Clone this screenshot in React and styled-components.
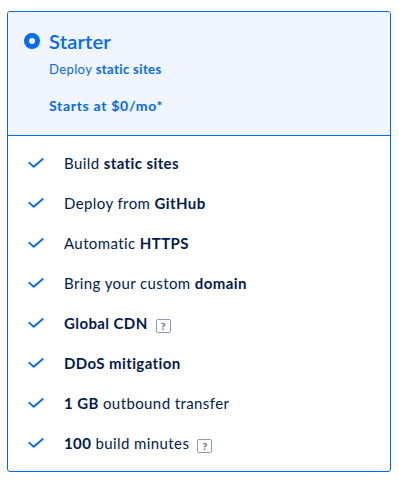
import React from "react";
import styled, { createGlobalStyle } from "styled-components";

const Global = createGlobalStyle`
  html, body { margin: 0; padding: 0; background: #fff; }
  body { font-family: Lato, "Open Sans", sans-serif; -webkit-font-smoothing: antialiased; }
`;

const Card = styled.div`
  margin: 11px 8px 0 7px;
  width: 384px;
  box-sizing: border-box;
  border: 1px solid #0069ff;
  border-radius: 3px;
  overflow: hidden;
`;

const Header = styled.div`
  background: #f1f6fe;
  border-bottom: 1px solid #0069ff;
  height: 124px;
  box-sizing: border-box;
  padding: 17px 16px 0 16px;
`;

const TitleRow = styled.div`
  display: flex;
  align-items: center;
  gap: 9px;
  height: 24px;
`;

const Radio = styled.span`
  width: 16px;
  height: 16px;
  box-sizing: border-box;
  border: 5px solid #0069ff;
  border-radius: 50%;
  background: #fff;
  flex: none;
`;

const Title = styled.h2`
  margin: 0;
  font-size: 20px;
  font-weight: 600;
  color: #0069ff;
  letter-spacing: 0.2px;
`;

const Sub = styled.p`
  margin: 7px 0 0 25px;
  font-size: 13px;
  color: #0069ff;
  line-height: 18px;
  letter-spacing: 0.4px;
  b { font-weight: 700; }
`;

const Price = styled.p`
  margin: 19px 0 0 25px;
  font-size: 14px;
  font-weight: 700;
  color: #0069ff;
  line-height: 18px;
  letter-spacing: 0.7px;
`;

const List = styled.ul`
  list-style: none;
  margin: 0;
  padding: 7px 0 8px;
`;

const Item = styled.li`
  display: flex;
  align-items: center;
  height: 40px;
  padding-left: 20px;
  font-size: 15px;
  color: #031b4e;
  letter-spacing: 0.4px;
  b { font-weight: 700; }
`;

const Check = styled.svg`
  width: 16px;
  height: 10px;
  margin-right: 20px;
  flex: none;
`;

const Help = styled.span`
  display: inline-flex;
  align-items: center;
  justify-content: center;
  vertical-align: -1px;
  width: 15px;
  height: 14px;
  box-sizing: border-box;
  margin-left: 8px;
  border: 1px solid #8f9bb0;
  border-radius: 2px;
  font-size: 10px;
  font-weight: 900;
  color: #5b6987;
  letter-spacing: 0;
  line-height: 1;
`;

const CheckIcon = () => (
  <Check viewBox="0 0 16 10">
    <path d="M1.2 4.6 L5.6 8.8 L14.8 1" fill="none" stroke="#0069ff" strokeWidth="1.8" strokeLinecap="round" strokeLinejoin="round" />
  </Check>
);

const features = [
  <>Build <b>static sites</b></>,
  <>Deploy from <b>GitHub</b></>,
  <>Automatic <b>HTTPS</b></>,
  <>Bring your custom <b>domain</b></>,
  <><b>Global CDN</b><Help>?</Help></>,
  <><b>DDoS mitigation</b></>,
  <><b>1 GB</b>&nbsp;outbound transfer</>,
  <><b>100</b>&nbsp;build minutes<Help>?</Help></>,
];

export default function App() {
  return (
    <>
      <Global />
      <Card>
        <Header>
          <TitleRow>
            <Radio />
            <Title>Starter</Title>
          </TitleRow>
          <Sub>Deploy <b>static sites</b></Sub>
          <Price>Starts at $0/mo*</Price>
        </Header>
        <List>
          {features.map((f, i) => (
            <Item key={i}>
              <CheckIcon />
              <span>{f}</span>
            </Item>
          ))}
        </List>
      </Card>
    </>
  );
}
